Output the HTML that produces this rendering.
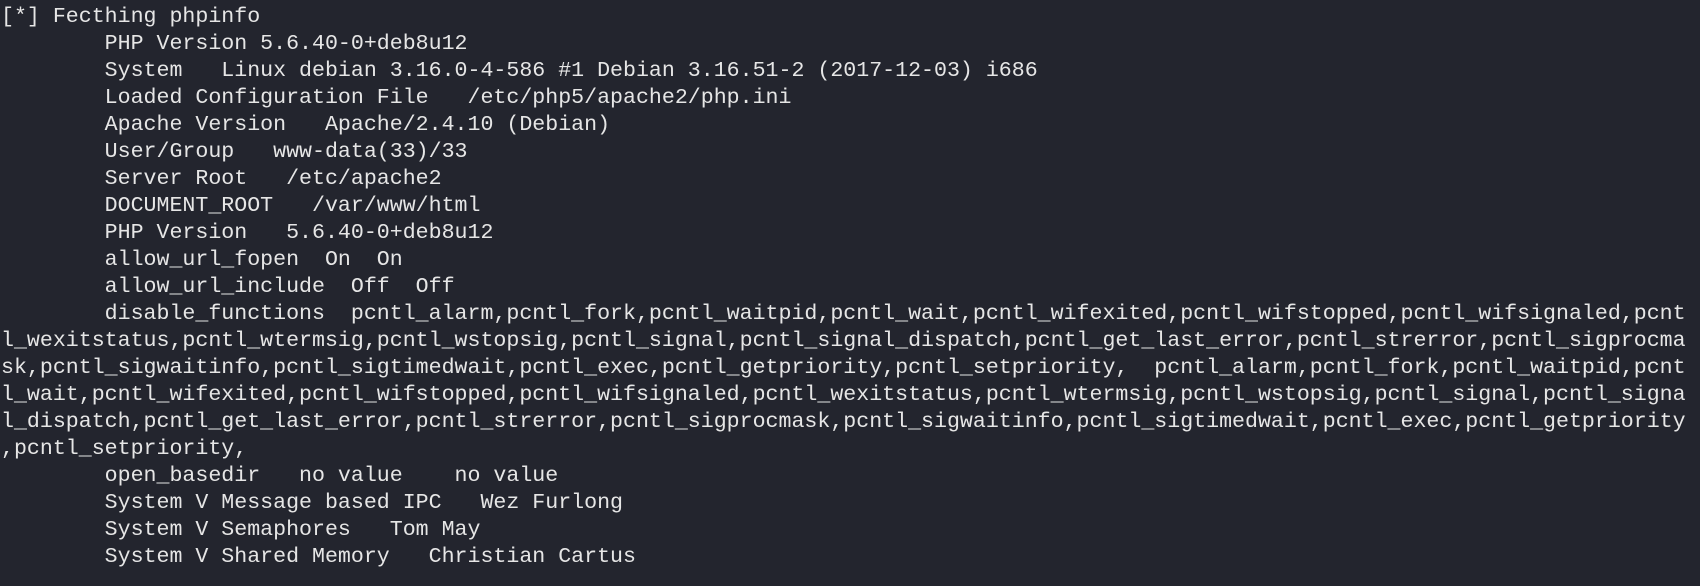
<!DOCTYPE html>
<html><head><meta charset="utf-8"><style>
html,body{margin:0;padding:0;background:#23252e;width:1700px;height:586px;overflow:hidden}
pre{margin:0;position:absolute;left:1px;top:4px;font-family:"Liberation Mono","DejaVu Sans Mono",monospace;font-size:21.6px;line-height:27px;color:#e6e6e6;white-space:pre}
</style></head><body><pre>[*] Fecthing phpinfo
        PHP Version 5.6.40-0+deb8u12
        System   Linux debian 3.16.0-4-586 #1 Debian 3.16.51-2 (2017-12-03) i686
        Loaded Configuration File   /etc/php5/apache2/php.ini
        Apache Version   Apache/2.4.10 (Debian)
        User/Group   www-data(33)/33
        Server Root   /etc/apache2
        DOCUMENT_ROOT   /var/www/html
        PHP Version   5.6.40-0+deb8u12
        allow_url_fopen  On  On
        allow_url_include  Off  Off
        disable_functions  pcntl_alarm,pcntl_fork,pcntl_waitpid,pcntl_wait,pcntl_wifexited,pcntl_wifstopped,pcntl_wifsignaled,pcnt
l_wexitstatus,pcntl_wtermsig,pcntl_wstopsig,pcntl_signal,pcntl_signal_dispatch,pcntl_get_last_error,pcntl_strerror,pcntl_sigprocma
sk,pcntl_sigwaitinfo,pcntl_sigtimedwait,pcntl_exec,pcntl_getpriority,pcntl_setpriority,  pcntl_alarm,pcntl_fork,pcntl_waitpid,pcnt
l_wait,pcntl_wifexited,pcntl_wifstopped,pcntl_wifsignaled,pcntl_wexitstatus,pcntl_wtermsig,pcntl_wstopsig,pcntl_signal,pcntl_signa
l_dispatch,pcntl_get_last_error,pcntl_strerror,pcntl_sigprocmask,pcntl_sigwaitinfo,pcntl_sigtimedwait,pcntl_exec,pcntl_getpriority
,pcntl_setpriority,
        open_basedir   no value    no value
        System V Message based IPC   Wez Furlong
        System V Semaphores   Tom May
        System V Shared Memory   Christian Cartus</pre></body></html>
